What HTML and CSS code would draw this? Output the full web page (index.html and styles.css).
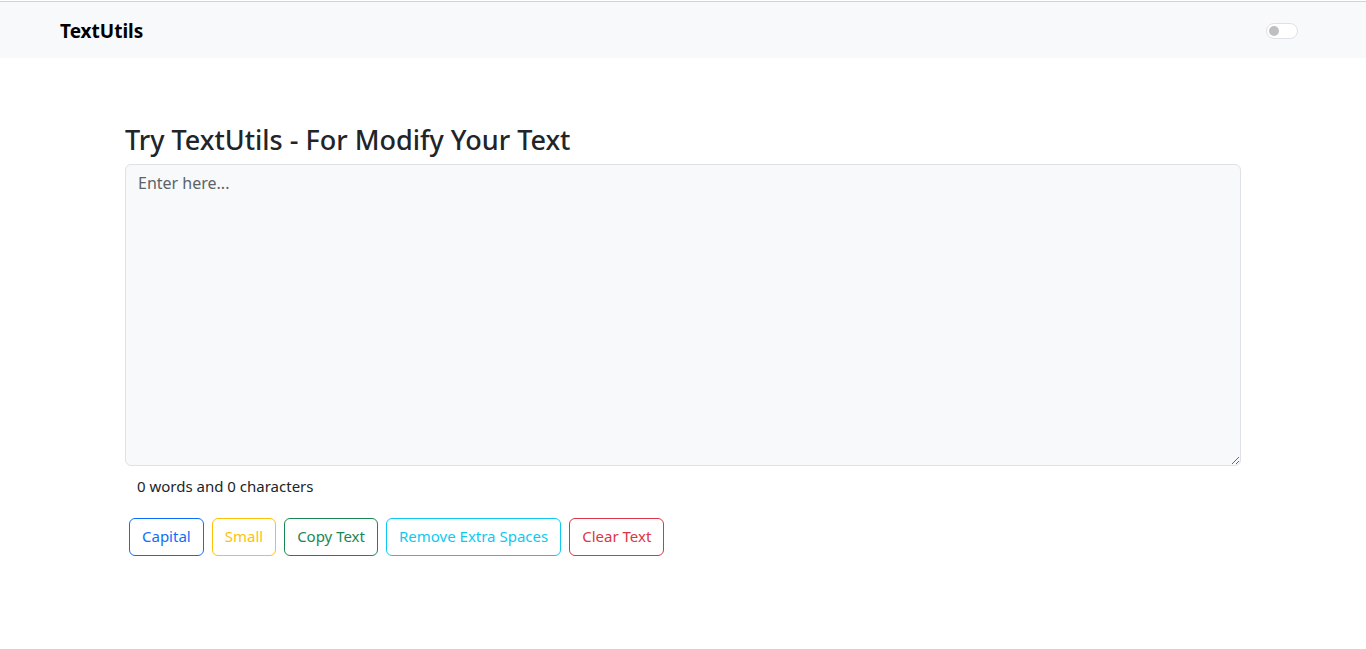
FILE: index.html
```html
<!DOCTYPE html>
<html lang="en">
<head>
<meta charset="utf-8">
<title>TextUtils</title>
<link rel="stylesheet" href="styles.css">
</head>
<body>
<nav class="navbar">
  <a class="brand" href="#">TextUtils</a>
  <label class="switch"><span class="knob"></span></label>
</nav>
<main class="container">
  <h2 class="title">Try TextUtils - For Modify Your Text</h2>
  <textarea class="box" placeholder="Enter here..." rows="12"></textarea>
  <p class="count">0 words and 0 characters</p>
  <div class="actions">
    <button class="btn primary">Capital</button>
    <button class="btn warning">Small</button>
    <button class="btn success">Copy Text</button>
    <button class="btn info">Remove Extra Spaces</button>
    <button class="btn danger">Clear Text</button>
  </div>
</main>
</body>
</html>
```
FILE: styles.css
```css
* { box-sizing: border-box; }
html, body { margin: 0; }
body {
  font-family: "Noto Sans", "Open Sans", sans-serif;
  font-size: 16px;
  line-height: 1.5;
  color: #212529;
  background: #fff;
  padding-top: 1px;
}
.navbar {
  border-top: 1px solid #d2d2d2;
  background: #f8f9fa;
  height: 57px;
  display: flex;
  align-items: center;
  justify-content: space-between;
  padding: 1px 68px 0 60px;
}
.brand {
  font-size: 19px;
  font-weight: 700;
  color: #000;
  text-decoration: none;
  line-height: 30px;
}
.switch {
  width: 32px;
  height: 16px;
  border: 1px solid #dee2e6;
  border-radius: 8px;
  background: #fff;
  display: flex;
  align-items: center;
  padding-left: 2px;
}
.knob {
  width: 10px;
  height: 10px;
  border-radius: 50%;
  background: #bfbfbf;
}
.container {
  width: 1116px;
  margin: 0 auto;
  padding-top: 63px;
}
.title {
  font-size: 27px;
  font-weight: 500;
  line-height: 38px;
  margin: 0 0 5px;
}
.box {
  display: block;
  width: 100%;
  height: 302px;
  background: #f8f9fa;
  border: 1px solid #dee2e6;
  border-radius: 6px;
  padding: 6px 12px;
  font: inherit;
  color: #212529;
  margin: 0;
}
.box::placeholder { color: #5c636a; }
.count {
  margin: 9px 0 16px;
  padding-left: 12px;
  font-size: 15px;
}
.actions {
  display: flex;
  gap: 8px;
  padding: 4px;
}
.btn {
  font: inherit;
  font-size: 15px;
  height: 38px;
  padding: 0 12px;
  background: transparent;
  border: 1px solid;
  border-radius: 6px;
  cursor: pointer;
}
.primary { color: #0d6efd; border-color: #0d6efd; }
.warning { color: #ffc107; border-color: #ffc107; }
.success { color: #198754; border-color: #198754; }
.info { color: #0dcaf0; border-color: #0dcaf0; }
.danger { color: #dc3545; border-color: #dc3545; }
```
